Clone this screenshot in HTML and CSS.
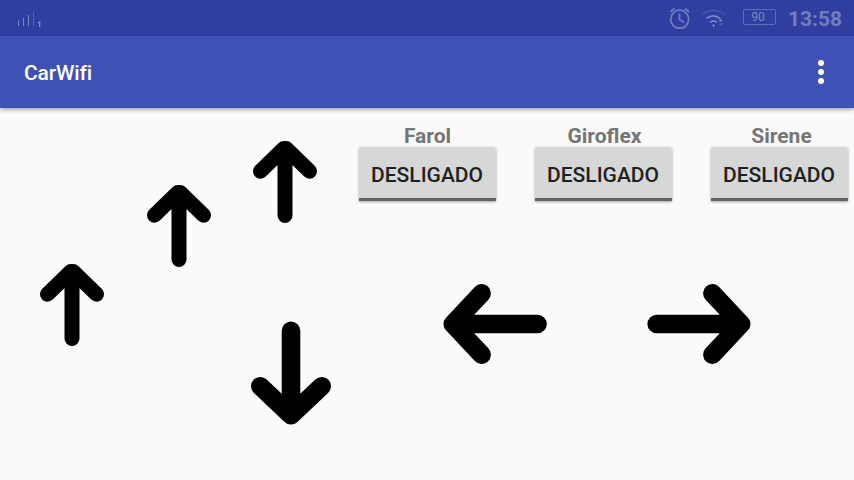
FILE: index.html
```html
<!DOCTYPE html>
<html lang="pt">
<head>
<meta charset="utf-8">
<title>CarWifi</title>
<link rel="stylesheet" href="styles.css">
</head>
<body>
<svg class="defs" width="0" height="0">
  <symbol id="arrow-small" viewBox="0 0 64 82"><path d="M7.5 30.2 30.7 7.6h2.6L56.5 30.2M32 8v66.5" fill="none" stroke="#000" stroke-width="15" stroke-linecap="round" stroke-linejoin="round"/></symbol>
  <symbol id="arrow-left" viewBox="0 0 104 80"><path d="M38.6 9.3 9.8 40l28.8 30.7M9.8 40h84.7" fill="none" stroke="#000" stroke-width="18.6" stroke-linecap="round" stroke-linejoin="round"/></symbol>
  <symbol id="arrow-right" viewBox="0 0 104 80"><path d="M65.4 9.3 94.2 40 65.4 70.7M94.2 40H9.7" fill="none" stroke="#000" stroke-width="18.6" stroke-linecap="round" stroke-linejoin="round"/></symbol>
  <symbol id="arrow-down" viewBox="0 0 80 104"><path d="M9.3 65.2 40 94.2l30.7-29M40 94.2V9.8" fill="none" stroke="#000" stroke-width="18.6" stroke-linecap="round" stroke-linejoin="round"/></symbol>
</svg>
<header class="status">
  <svg class="signal" width="26" height="18" viewBox="0 0 26 18"><g fill="none" stroke="#7c86c6"><path d="M1.5 10v6M6.5 8v8"/><path d="M11.5 5v11"/><path d="M16.5 2v14" stroke="#5561b2"/><path d="M21 13l1.6-1v5" stroke-width="1.4"/></g></svg>
  <svg class="alarm" width="22" height="22" viewBox="0 0 22 22"><g fill="none" stroke="#707bc0" stroke-width="1.7"><circle cx="10.7" cy="12.2" r="9"/><path d="M10.5 6.5v6l4.5 2.7M1.2 5 5.5 1.5M20.2 5l-4.3-3.5"/></g></svg>
  <svg class="wifi" width="24" height="20" viewBox="0 0 24 20"><g fill="none" stroke="#7c86c5" stroke-width="1.7"><path d="M.5 5.2Q11.5-2.4 22.5 5.2" stroke="#4652aa"/><path d="M4.5 9.5q7-5.2 14 .3"/><path d="M8 13.3q3.5-2.7 7 0"/></g><path d="M11.5 15l1.5 1.5-1.5 1.5-1.5-1.5zM16.8 12.3h4l-2-2.4z" fill="#7c86c5"/><path d="M16.8 14.5h4l-2 2.6z" fill="#5561b2"/></svg>
  <span class="battery">90</span>
  <span class="clock">13:58</span>
</header>
<nav class="appbar">
  <h1>CarWifi</h1>
  <svg width="6" height="24" viewBox="0 0 6 24" fill="#fff"><circle cx="3" cy="3" r="3"/><circle cx="3" cy="12" r="3"/><circle cx="3" cy="21" r="3"/></svg>
</nav>
<main>
  <section class="speed">
    <div class="steps">
      <svg class="low" width="64" height="82"><use href="#arrow-small"/></svg>
      <svg class="mid" width="64" height="82"><use href="#arrow-small"/></svg>
      <svg class="high" width="64" height="82"><use href="#arrow-small"/></svg>
    </div>
    <svg class="reverse" width="80" height="104"><use href="#arrow-down"/></svg>
  </section>
  <section class="controls">
    <div class="toggles">
      <div class="toggle"><span>Farol</span><button>DESLIGADO</button></div>
      <div class="toggle"><span>Giroflex</span><button>DESLIGADO</button></div>
      <div class="toggle"><span>Sirene</span><button>DESLIGADO</button></div>
    </div>
    <div class="steer">
      <svg width="104" height="80"><use href="#arrow-left"/></svg>
      <svg width="104" height="80"><use href="#arrow-right"/></svg>
    </div>
  </section>
</main>
</body>
</html>
```
FILE: styles.css
```css
* { box-sizing: border-box; }
body {
  margin: 0;
  height: 480px;
  overflow: hidden;
  background: #fafafa;
  font-family: Roboto, sans-serif;
}
svg { display: block; flex: none; }
.defs { position: absolute; }
.status {
  position: relative;
  z-index: 1;
  display: flex;
  align-items: flex-start;
  height: 36px;
  background: #303f9f;
  color: #727dc1;
}
.signal { margin: 10px 0 0 17px; }
.alarm { margin: 7px 0 0 auto; }
.wifi { margin: 9px 0 0 11px; }
.battery {
  width: 33px;
  height: 16px;
  margin: 9px 0 0 17px;
  padding-right: 3px;
  border: 1px solid #5f6bb7;
  border-radius: 2px;
  color: #7c86c5;
  font-size: 12px;
  line-height: 15px;
  text-align: center;
}
.clock {
  width: 54px;
  margin: 6px 12px 0 12px;
  font-size: 21px;
  font-weight: 700;
  line-height: 26px;
  white-space: nowrap;
}
.appbar {
  display: flex;
  align-items: center;
  justify-content: space-between;
  height: 72px;
  padding: 0 30px 0 24px;
  background: #3f51b5;
  box-shadow: 0 1px 5px rgba(0, 0, 0, .45);
}
h1 {
  margin: 2px 0 0;
  color: #fff;
  font-size: 21px;
  font-weight: 500;
  letter-spacing: -.15px;
  line-height: 28px;
}
main { display: flex; }
.speed { width: 359px; padding: 33px 0 0 40px; }
.steps { display: flex; }
.low { margin-top: 123px; }
.mid { margin: 44px 0 0 43px; }
.high { margin-left: 42px; }
.reverse { margin: -25px 0 0 211px; }
.controls { width: 495px; padding-top: 15px; }
.toggles { display: flex; gap: 39px; }
.toggle {
  display: flex;
  flex-direction: column;
  align-items: center;
  width: 137px;
}
.toggle span {
  height: 24px;
  color: #757575;
  font-size: 21px;
  font-weight: 700;
  line-height: 26px;
}
.toggle:nth-child(2) span { padding-left: 2px; }
.toggle:nth-child(3) span { padding-left: 4px; }
button {
  width: 137px;
  height: 54px;
  padding: 4px 1px 0 0;
  border: 0;
  border-bottom: 3px solid #646464;
  border-radius: 3px 3px 0 0;
  background: #d6d8d7;
  box-shadow: 0 1px 3px rgba(0, 0, 0, .35);
  color: #1e1f1f;
  font: 500 21px/26px Roboto, sans-serif;
  white-space: nowrap;
}
.steer { display: flex; gap: 100px; margin: 83px 0 0 84px; }
```
